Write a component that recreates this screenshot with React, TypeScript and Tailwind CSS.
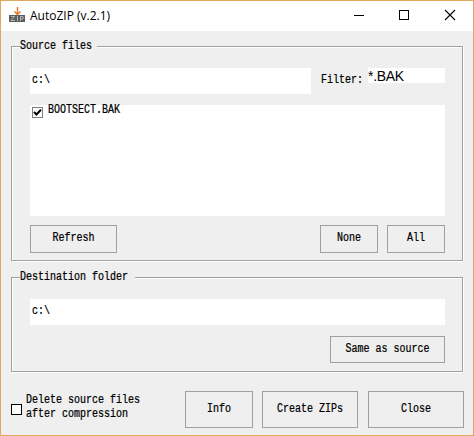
import type { ReactNode } from "react";

function Mono({ children }: { children: ReactNode }) {
  return (
    <span className="inline-block origin-center scale-y-[1.2] whitespace-pre font-['Liberation_Mono','DejaVu_Sans_Mono',monospace] text-[10px] leading-[12px] text-black [-webkit-text-stroke:0.2px_black]">
      {children}
    </span>
  );
}

function Button({ label, className }: { label: string; className: string }) {
  return (
    <button className={`flex shrink-0 items-center justify-center border border-[#a0a0a0] bg-[#efefef] ${className}`}>
      <Mono>{label}</Mono>
    </button>
  );
}

function Group({ label, legend, className, children }: { label: string; legend: string; className: string; children: ReactNode }) {
  return (
    <section
      className={`ml-[10px] w-[452px] shrink-0 border border-[#a0a0a0] pl-[18px] shadow-[1px_1px_0_#fff,inset_1px_1px_0_#fff] ${className}`}
    >
      <div className={`-mt-[6px] -ml-[10px] flex h-[12px] bg-[#efefef] ${legend}`}>
        <Mono>{label}</Mono>
      </div>
      {children}
    </section>
  );
}

function AppIcon() {
  return (
    <svg width="16" height="17" viewBox="0 0 16 17" className="mt-[6px] shrink-0">
      <rect x="0" y="8" width="16" height="7" fill="#5d5d5d" />
      <path d="M8.5 0v7M5.5 4.5l3 3 3-3" fill="none" stroke="#e07a2c" strokeWidth="1.5" />
      <path d="M2 9.5h3.5L2 13.5h4M8.5 9v5M11.5 14V9.5h2.5v2.5h-2.5" fill="none" stroke="#b4b4b4" />
    </svg>
  );
}

export default function App() {
  return (
    <div className="flex h-[436px] w-[474px] flex-col overflow-hidden border border-[#e0a960] bg-[#efefef]">
      <header className="flex h-[30px] shrink-0 bg-white pl-2">
        <AppIcon />
        <h1 className="ml-[5px] w-[120px] whitespace-nowrap pt-[5px] font-['Open_Sans','Noto_Sans',sans-serif] text-[12px] leading-[20px] text-black">
          AutoZIP (v.2.1)
        </h1>
        <svg width="112" height="12" viewBox="0 0 112 12" className="mt-2 ml-[203px] shrink-0" fill="none" stroke="black" shapeRendering="crispEdges">
          <path d="M1 6.5h10M46.5 1.5h9v9h-9z" />
          <path d="M92 1l10 10M102 1L92 11" shapeRendering="auto" strokeWidth="1.1" />
        </svg>
      </header>

      <Group label="Source files" legend="w-[77px]" className="mt-[15px] h-[215px]">
        <div className="mt-[15px] flex">
          <div className="flex h-[26px] w-[281px] items-center bg-white pl-[2px]"><Mono>{"c:\\"}</Mono></div>
          <div className="ml-[10px] flex w-[47px] pt-[7px]"><Mono>Filter:</Mono></div>
          <div className="h-[15px] w-[77px] bg-white font-['Liberation_Sans',Arial,sans-serif] text-[14px] leading-[17px] tracking-[-0.3px]">*.BAK</div>
        </div>
        <div className="mt-[11px] flex h-[111px] w-[415px] items-start bg-white pt-[2px] pl-[2px]">
          <span className="flex h-[11px] w-[11px] border border-[#808080] bg-white">
            <svg width="9" height="9" viewBox="0 0 9 9" fill="none" stroke="black" strokeWidth="2"><path d="M1 3.8l2.4 2.7L8 1.8" /></svg>
          </span>
          <span className="-mt-[2px] ml-[5px] flex"><Mono>BOOTSECT.BAK</Mono></span>
        </div>
        <div className="mt-[9px] flex">
          <Button label="Refresh" className="h-[28px] w-[87px]" />
          <Button label="None" className="ml-[203px] h-[28px] w-[58px]" />
          <Button label="All" className="ml-[9px] h-[28px] w-[58px]" />
        </div>
      </Group>

      <Group label="Destination folder" legend="w-[115px]" className="mt-[16px] h-[95px]">
        <div className="mt-[15px] flex h-[26px] w-[415px] items-center bg-white pl-[2px]"><Mono>{"c:\\"}</Mono></div>
        <Button label="Same as source" className="mt-[11px] ml-[300px] h-[27px] w-[115px]" />
      </Group>

      <footer className="mt-[19px] flex pl-[10px]">
        <span className="mt-[13px] h-[11px] w-[11px] shrink-0 border border-black bg-white" />
        <div className="ml-[4px] flex w-[159px] flex-col items-start gap-[2px] pt-[4px]">
          <Mono>Delete source files</Mono>
          <Mono>after compression</Mono>
        </div>
        <Button label="Info" className="h-[37px] w-[68px]" />
        <Button label="Create ZIPs" className="ml-[9px] h-[37px] w-[96px]" />
        <Button label="Close" className="ml-[10px] h-[37px] w-[96px]" />
      </footer>
    </div>
  );
}
